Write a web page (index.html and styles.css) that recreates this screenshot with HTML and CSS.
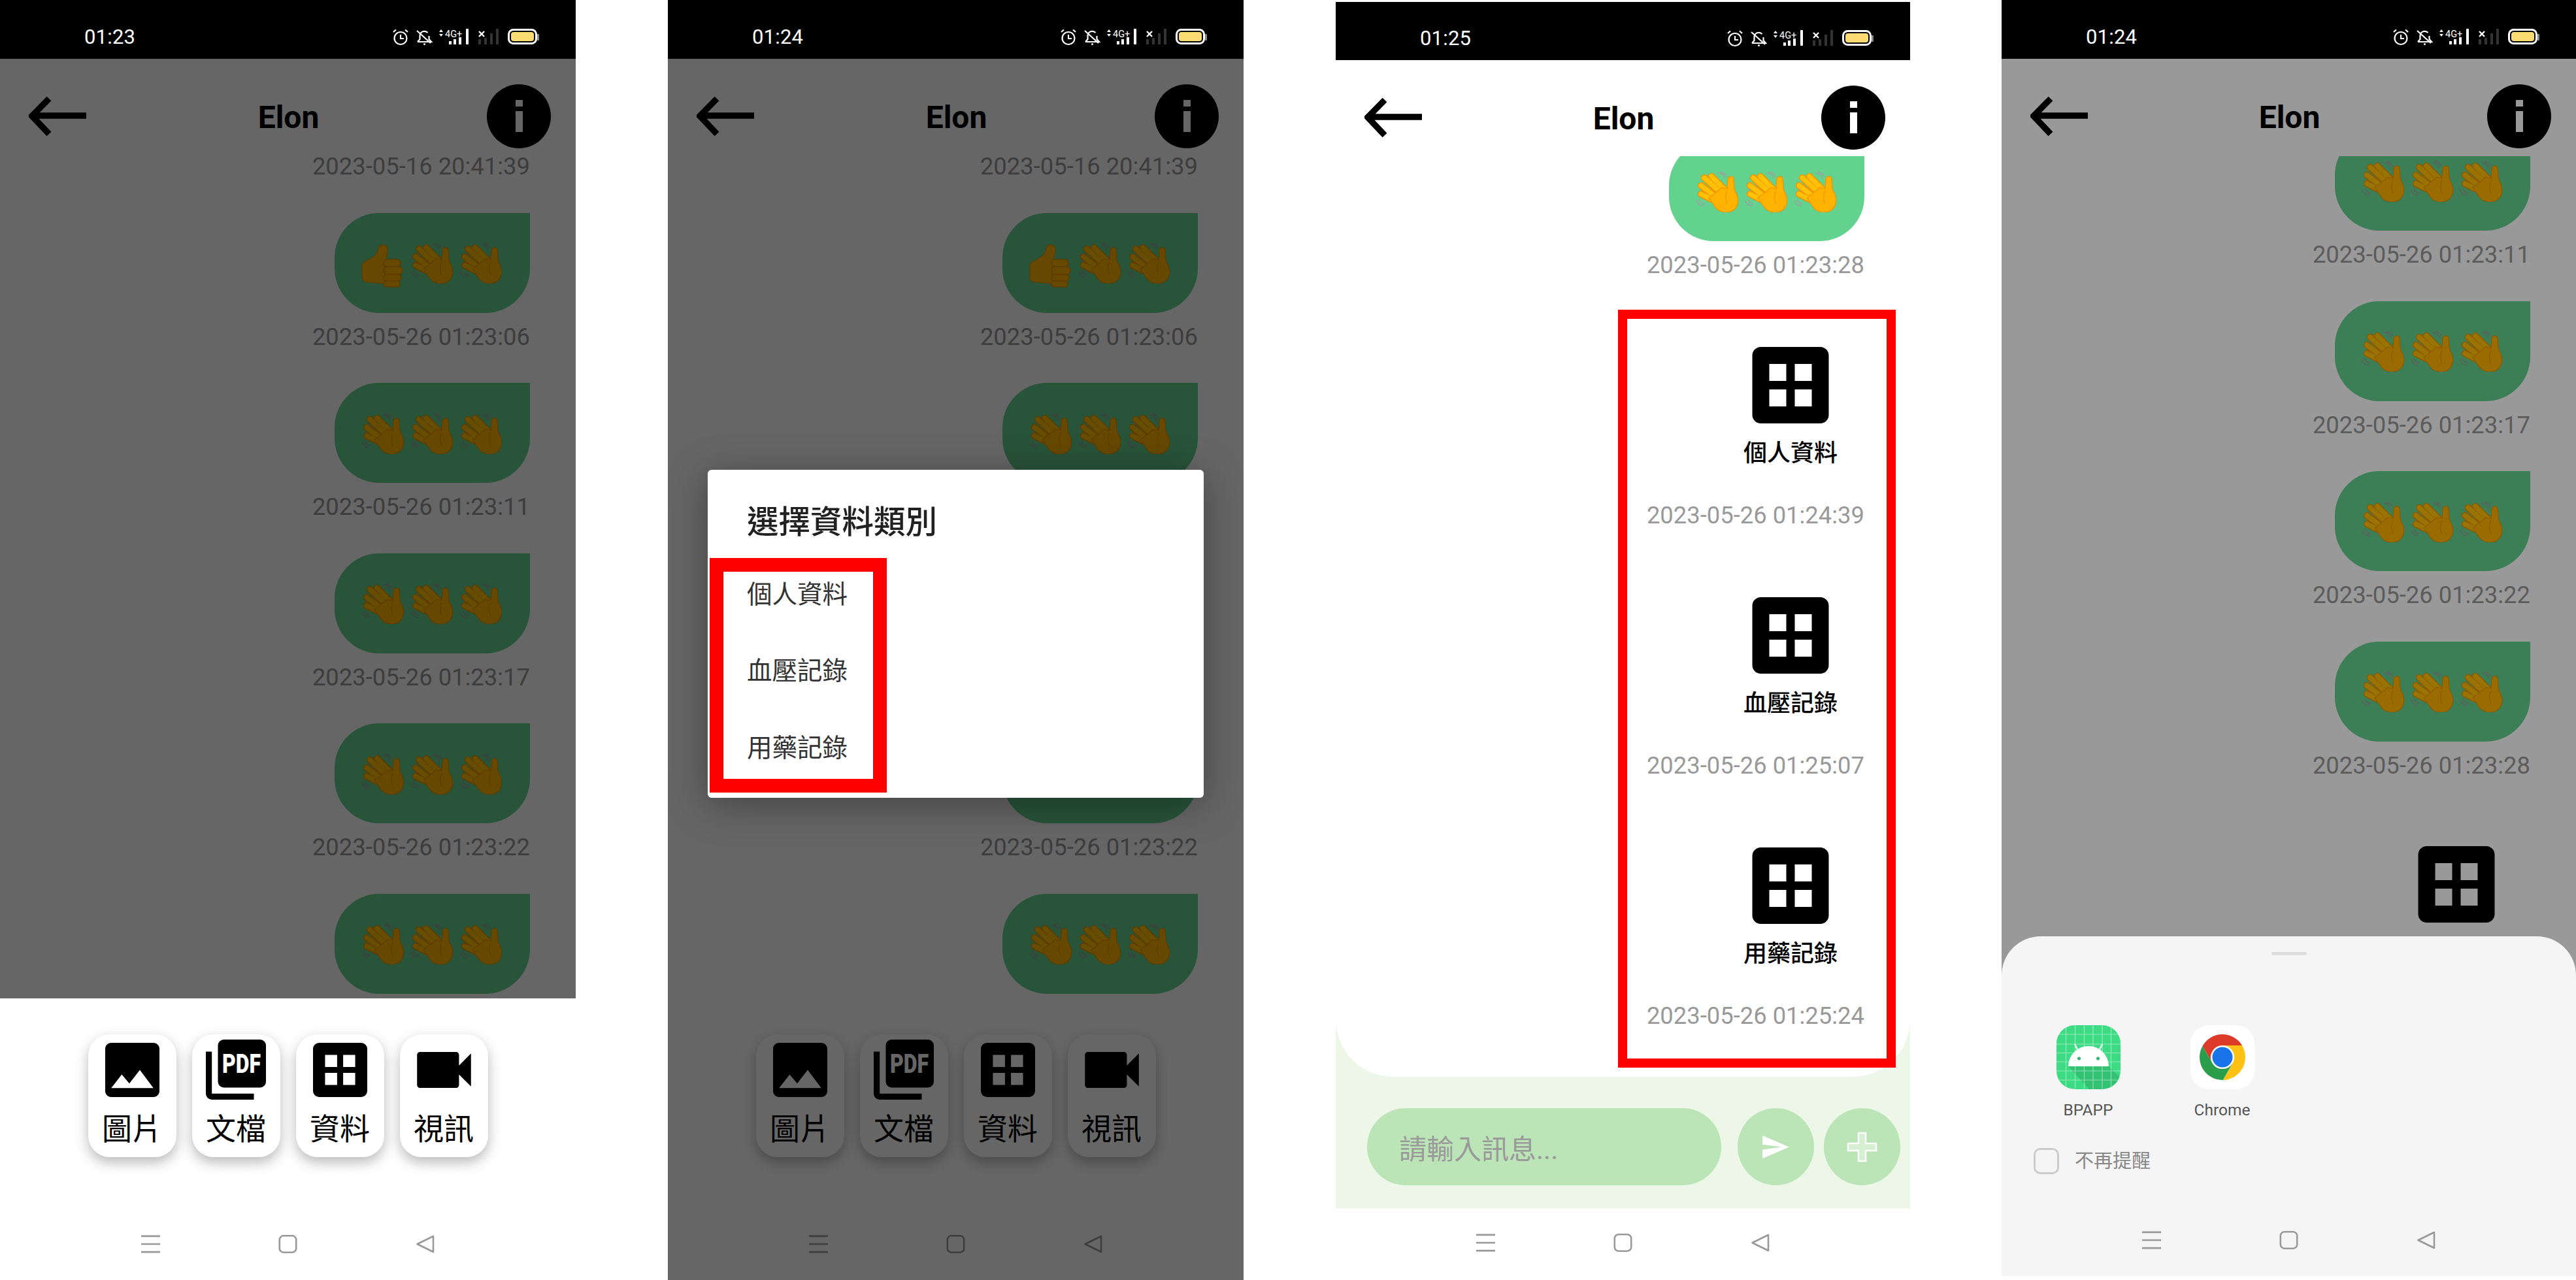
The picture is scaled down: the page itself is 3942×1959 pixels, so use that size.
FILE: index.html
```html
<!DOCTYPE html>
<html lang="zh-Hant">
<head>
    <meta charset="UTF-8">
    <title>BPAPP 聊天畫面</title>
    <link rel="stylesheet" href="styles.css">
</head>
<body>
    <!-- shared icons -->
    <svg class="sprites" xmlns="http://www.w3.org/2000/svg">
        <symbol id="status-icons" viewBox="0 0 226 25">
            <g fill="none" stroke="#fff" stroke-width="2.2">
                <circle cx="13" cy="14.5" r="9.5"/>
                <path d="M13 9v6h5M2 5l4-3.5M24 5l-4-3.5"/>
                <path d="M39 20l3.5-4v-5.5a7 7 0 0 1 12-4.5M56.500 11v5l3.500 4H39M38 3l21 19"/>
            </g>
            <circle cx="49.500" cy="23.500" r="1.500" fill="#fff"/>
            <path d="M75 1l3 4h-6zM75 12l3-4h-6z" fill="#fff"/>
            <g fill="#fff">
                <rect x="87" y="19" width="4" height="5"/>
                <rect x="94" y="16" width="4" height="8"/>
                <rect x="102" y="13" width="4" height="11"/>
                <rect x="113" y="0" width="4" height="24" rx="1"/>
            </g>
            <path d="M133 4l8 8M141 4l-8 8" stroke="#fff" stroke-width="2.4"/>
            <g fill="#333">
                <rect x="132" y="16" width="4" height="8"/>
                <rect x="141" y="14" width="4" height="10"/>
                <rect x="150" y="7" width="4" height="17"/>
                <rect x="159" y="0" width="4" height="24"/>
            </g>
            <rect x="178.500" y="1.500" width="42" height="21" rx="7" fill="#000" stroke="#fff" stroke-width="3"/>
            <rect x="182" y="5" width="35" height="14" rx="4" fill="#ffdc73"/>
            <rect x="222" y="8" width="3" height="10" rx="1" fill="#888"/>
        </symbol>

        <symbol id="clap" viewBox="0 0 75 64">
            <g fill="none" stroke="#9e9e9e" stroke-width="1.300" stroke-linecap="round">
                <path d="M38 4c4 0 8 2 10 7M42 2c4 1 7 3 9 7M5 46c1 4 5 7 10 8M9 44c1 3 4 6 8 7"/>
            </g>
            <g fill="none" stroke-linecap="round">
                <g stroke="#ef9400" stroke-width="10.500">
                    <path d="M28 9l21 21M17 11l23 21M12 23l21 16M12 36l16 8"/>
                </g>
                <g stroke="#ffc107" stroke-width="7.500">
                    <path d="M28 9l21 21M17 11l23 21M12 23l21 16M12 36l16 8"/>
                </g>
            </g>
            <path d="M24 42l20-16 8 2 1-14c0-6 8-7 9-1 1 7 0 13 2 18 4 7 6 13 4 20-2 9-11 14-20 13-8-1-14-6-17-12z" fill="#ffb300" stroke="#ef9400" stroke-width="1.200"/>
            <path d="M52 31c-3 6-3 14 0 20" fill="none" stroke="#ef9400" stroke-width="1.300"/>
        </symbol>

        <symbol id="thumb" viewBox="0 0 75 64" overflow="visible">
            <path d="M5 36c0-3 3-5 7-7 10-5 17-9 18-19 0-7 14-7 14 1 0 7-2 13-4 17v36l-26-2c-6 0-9-4-9-8z" fill="#ffb300" stroke="#ef9400" stroke-width="1.200"/>
            <g fill="#ffb300" stroke="#ef9400" stroke-width="1.500">
                <rect x="38" y="27" width="26" height="11" rx="5.500"/>
                <rect x="38" y="38" width="29" height="12" rx="6"/>
                <rect x="38" y="50" width="27" height="10" rx="5"/>
                <rect x="38" y="60" width="25" height="9" rx="4.500"/>
            </g>
        </symbol>

        <symbol id="grid" viewBox="3 3 18 18">
            <path d="M5 3h14a2 2 0 0 1 2 2v14a2 2 0 0 1-2 2H5a2 2 0 0 1-2-2V5a2 2 0 0 1 2-2zM7 7v4h4V7zM13 7v4h4V7zM7 13v4h4v-4zM13 13v4h4v-4z" fill-rule="evenodd"/>
        </symbol>

        <symbol id="image" viewBox="3 3 18 18">
            <path d="M21 19V5c0-1.100-.9-2-2-2H5c-1.100 0-2 .9-2 2v14c0 1.100.9 2 2 2h14c1.100 0 2-.9 2-2zM8.500 13.500l2.500 3.010L14.500 12l4.500 6H5l3.500-4.500z"/>
        </symbol>

        <symbol id="pdf" viewBox="0 0 92 92">
            <rect x="18.500" y="0" width="73.500" height="73.500" rx="9"/>
            <path d="M0 18.500h9.200v64.300h64.300V92H9.200A9.200 9.200 0 0 1 0 82.800z"/>
        </symbol>

        <symbol id="video" viewBox="3 6 18 12">
            <path d="M17 10.500V7c0-.55-.45-1-1-1H4c-.55 0-1 .45-1 1v10c0 .55.45 1 1 1h12c.55 0 1-.45 1-1v-3.500l4 4v-11l-4 4z"/>
        </symbol>

        <symbol id="back" viewBox="0 0 88 60">
            <path d="M88 29H6M31 3L5 29.500 31 57" fill="none" stroke="#000" stroke-width="9.500"/>
        </symbol>

        <symbol id="info" viewBox="0 0 98 98">
            <circle cx="49" cy="49" r="49"/>
            <rect x="44" y="24" width="11" height="10" fill="#fff"/>
            <rect x="44" y="41" width="11" height="32" fill="#fff"/>
        </symbol>

        <symbol id="nav-menu" viewBox="0 0 30 28">
            <path d="M0 1.500h30M0 14h30M0 26.500h30" stroke="#999" stroke-width="2.800"/>
        </symbol>
        <symbol id="nav-home" viewBox="0 0 28 28">
            <rect x="1.300" y="1.300" width="25.400" height="25.400" rx="6" fill="none" stroke="#999" stroke-width="2.600"/>
        </symbol>
        <symbol id="nav-back" viewBox="0 0 28 28">
            <path d="M26.500 2v24L2 14z" fill="none" stroke="#999" stroke-width="2.600" stroke-linejoin="round"/>
        </symbol>
    </svg>

    <div class="page">

        <!-- 1: attachment panel -->
        <section class="phone">
            <div class="status"><span class="clock">01:23</span><svg class="status-icons"><use href="#status-icons"/><text x="81" y="17" class="net-text">4G+</text></svg></div>
            <div class="chat">
                <header class="chat-head chat-head--short">
                    <svg class="back"><use href="#back"/></svg>
                    <h1 class="chat-title">Elon</h1>
                    <svg class="info"><use href="#info"/></svg>
                </header>
                <div class="msg-list">
                    <div class="msg msg--first"><div class="time">2023-05-16 20:41:39</div></div>
                    <div class="msg">
                        <div class="bubble"><svg class="emoji"><use href="#thumb"/></svg><svg class="emoji"><use href="#clap"/></svg><svg class="emoji"><use href="#clap"/></svg></div>
                        <div class="time">2023-05-26 01:23:06</div>
                    </div>
                    <div class="msg">
                        <div class="bubble"><svg class="emoji"><use href="#clap"/></svg><svg class="emoji"><use href="#clap"/></svg><svg class="emoji"><use href="#clap"/></svg></div>
                        <div class="time">2023-05-26 01:23:11</div>
                    </div>
                    <div class="msg">
                        <div class="bubble"><svg class="emoji"><use href="#clap"/></svg><svg class="emoji"><use href="#clap"/></svg><svg class="emoji"><use href="#clap"/></svg></div>
                        <div class="time">2023-05-26 01:23:17</div>
                    </div>
                    <div class="msg">
                        <div class="bubble"><svg class="emoji"><use href="#clap"/></svg><svg class="emoji"><use href="#clap"/></svg><svg class="emoji"><use href="#clap"/></svg></div>
                        <div class="time">2023-05-26 01:23:22</div>
                    </div>
                    <div class="msg">
                        <div class="bubble"><svg class="emoji"><use href="#clap"/></svg><svg class="emoji"><use href="#clap"/></svg><svg class="emoji"><use href="#clap"/></svg></div>
                    </div>
                </div>
                <div class="dim"></div>
            </div>
            <div class="attach-panel">
                <div class="attach-card"><svg class="ic-image"><use href="#image"/></svg><span>圖片</span></div>
                <div class="attach-card"><svg class="ic-pdf"><use href="#pdf"/><text class="pdf-text" transform="translate(25 51) scale(.8 1)">PDF</text></svg><span>文檔</span></div>
                <div class="attach-card"><svg class="ic-image"><use href="#grid"/></svg><span>資料</span></div>
                <div class="attach-card"><svg class="ic-video"><use href="#video"/></svg><span>視訊</span></div>
            </div>
            <nav class="navbar">
                <svg class="nav-icon"><use href="#nav-menu"/></svg>
                <svg class="nav-icon"><use href="#nav-home"/></svg>
                <svg class="nav-icon"><use href="#nav-back"/></svg>
            </nav>
        </section>

        <!-- 2: category dialog -->
        <section class="phone">
            <div class="status"><span class="clock">01:24</span><svg class="status-icons"><use href="#status-icons"/><text x="81" y="17" class="net-text">4G+</text></svg></div>
            <div class="chat">
                <header class="chat-head chat-head--short">
                    <svg class="back"><use href="#back"/></svg>
                    <h1 class="chat-title">Elon</h1>
                    <svg class="info"><use href="#info"/></svg>
                </header>
                <div class="msg-list">
                    <div class="msg msg--first"><div class="time">2023-05-16 20:41:39</div></div>
                    <div class="msg">
                        <div class="bubble"><svg class="emoji"><use href="#thumb"/></svg><svg class="emoji"><use href="#clap"/></svg><svg class="emoji"><use href="#clap"/></svg></div>
                        <div class="time">2023-05-26 01:23:06</div>
                    </div>
                    <div class="msg">
                        <div class="bubble"><svg class="emoji"><use href="#clap"/></svg><svg class="emoji"><use href="#clap"/></svg><svg class="emoji"><use href="#clap"/></svg></div>
                        <div class="time">2023-05-26 01:23:11</div>
                    </div>
                    <div class="msg">
                        <div class="bubble"><svg class="emoji"><use href="#clap"/></svg><svg class="emoji"><use href="#clap"/></svg><svg class="emoji"><use href="#clap"/></svg></div>
                        <div class="time">2023-05-26 01:23:17</div>
                    </div>
                    <div class="msg">
                        <div class="bubble"><svg class="emoji"><use href="#clap"/></svg><svg class="emoji"><use href="#clap"/></svg><svg class="emoji"><use href="#clap"/></svg></div>
                        <div class="time">2023-05-26 01:23:22</div>
                    </div>
                    <div class="msg">
                        <div class="bubble"><svg class="emoji"><use href="#clap"/></svg><svg class="emoji"><use href="#clap"/></svg><svg class="emoji"><use href="#clap"/></svg></div>
                    </div>
                </div>
            </div>
            <div class="attach-panel">
                <div class="attach-card"><svg class="ic-image"><use href="#image"/></svg><span>圖片</span></div>
                <div class="attach-card"><svg class="ic-pdf"><use href="#pdf"/><text class="pdf-text" transform="translate(25 51) scale(.8 1)">PDF</text></svg><span>文檔</span></div>
                <div class="attach-card"><svg class="ic-image"><use href="#grid"/></svg><span>資料</span></div>
                <div class="attach-card"><svg class="ic-video"><use href="#video"/></svg><span>視訊</span></div>
            </div>
            <nav class="navbar">
                <svg class="nav-icon"><use href="#nav-menu"/></svg>
                <svg class="nav-icon"><use href="#nav-home"/></svg>
                <svg class="nav-icon"><use href="#nav-back"/></svg>
            </nav>
            <div class="dim dim--phone"></div>
            <div class="dialog">
                <h2 class="dialog-title">選擇資料類別</h2>
                <div class="dialog-item">個人資料</div>
                <div class="dialog-item">血壓記錄</div>
                <div class="dialog-item">用藥記錄</div>
                <div class="mark mark--dialog"></div>
            </div>
        </section>

        <!-- 3: sent records -->
        <section class="phone phone--input">
            <div class="status"><span class="clock">01:25</span><svg class="status-icons"><use href="#status-icons"/><text x="81" y="17" class="net-text">4G+</text></svg></div>
            <div class="chat chat--panel">
                <header class="chat-head">
                    <svg class="back"><use href="#back"/></svg>
                    <h1 class="chat-title">Elon</h1>
                    <svg class="info"><use href="#info"/></svg>
                </header>
                <div class="msg-list msg-list--end">
                    <div class="msg">
                        <div class="bubble"><svg class="emoji"><use href="#clap"/></svg><svg class="emoji"><use href="#clap"/></svg><svg class="emoji"><use href="#clap"/></svg></div>
                        <div class="time">2023-05-26 01:23:28</div>
                    </div>
                    <div class="msg msg--file">
                        <div class="file"><svg class="file-icon"><use href="#grid"/></svg><div class="file-name">個人資料</div></div>
                        <div class="time time--file">2023-05-26 01:24:39</div>
                    </div>
                    <div class="msg msg--file">
                        <div class="file"><svg class="file-icon"><use href="#grid"/></svg><div class="file-name">血壓記錄</div></div>
                        <div class="time time--file">2023-05-26 01:25:07</div>
                    </div>
                    <div class="msg msg--file">
                        <div class="file"><svg class="file-icon"><use href="#grid"/></svg><div class="file-name">用藥記錄</div></div>
                        <div class="time time--file">2023-05-26 01:25:24</div>
                    </div>
                </div>
            </div>
            <div class="mark mark--list"></div>
            <div class="input-bar">
                <div class="msg-input">請輸入訊息...</div>
                <div class="round-btn">
                    <svg class="ic-send" viewBox="2 3 21 18"><path d="M2.010 21L23 12 2.010 3 2 10l15 2-15 2z" fill="#fff"/></svg>
                </div>
                <div class="round-btn round-btn--plus">
                    <svg class="ic-plus" viewBox="0 0 47 47"><path d="M18 2h11v16h16v11H29v16H18V29H2V18h16z" fill="#d5efd0" stroke="#fff" stroke-width="2.500" stroke-linejoin="round"/></svg>
                </div>
            </div>
            <nav class="navbar navbar--raised">
                <svg class="nav-icon"><use href="#nav-menu"/></svg>
                <svg class="nav-icon"><use href="#nav-home"/></svg>
                <svg class="nav-icon"><use href="#nav-back"/></svg>
            </nav>
        </section>

        <!-- 4: open with -->
        <section class="phone phone--sheet">
            <div class="status"><span class="clock">01:24</span><svg class="status-icons"><use href="#status-icons"/><text x="81" y="17" class="net-text">4G+</text></svg></div>
            <div class="chat">
                <header class="chat-head">
                    <svg class="back"><use href="#back"/></svg>
                    <h1 class="chat-title">Elon</h1>
                    <svg class="info"><use href="#info"/></svg>
                </header>
                <div class="msg-list">
                    <div class="msg msg--cut">
                        <div class="bubble"><svg class="emoji"><use href="#clap"/></svg><svg class="emoji"><use href="#clap"/></svg><svg class="emoji"><use href="#clap"/></svg></div>
                        <div class="time">2023-05-26 01:23:11</div>
                    </div>
                    <div class="msg">
                        <div class="bubble"><svg class="emoji"><use href="#clap"/></svg><svg class="emoji"><use href="#clap"/></svg><svg class="emoji"><use href="#clap"/></svg></div>
                        <div class="time">2023-05-26 01:23:17</div>
                    </div>
                    <div class="msg">
                        <div class="bubble"><svg class="emoji"><use href="#clap"/></svg><svg class="emoji"><use href="#clap"/></svg><svg class="emoji"><use href="#clap"/></svg></div>
                        <div class="time">2023-05-26 01:23:22</div>
                    </div>
                    <div class="msg">
                        <div class="bubble"><svg class="emoji"><use href="#clap"/></svg><svg class="emoji"><use href="#clap"/></svg><svg class="emoji"><use href="#clap"/></svg></div>
                        <div class="time">2023-05-26 01:23:28</div>
                    </div>
                    <div class="msg msg--file">
                        <div class="file"><svg class="file-icon"><use href="#grid"/></svg></div>
                    </div>
                </div>
            </div>
            <div class="dim dim--light"></div>
            <div class="sheet">
                <div class="sheet-handle"></div>
                <div class="app-row">
                    <div class="app">
                        <svg class="app-icon" viewBox="0 0 98 98">
                            <defs><clipPath id="tile"><rect width="98" height="98" rx="28"/></clipPath></defs>
                            <g clip-path="url(#tile)">
                                <rect width="98" height="98" fill="#3ddc84"/>
                                <path d="M18 63h62l18 18v17H50z" fill="#2fb56c" opacity=".7"/>
                                <path d="M14.500 0v98M28.500 0v98M42.500 0v98M56 0v98M70 0v98M83.500 0v98M0 14h98M0 29h98M0 42.500h98M0 56h98M0 70h98M0 84h98" stroke="#fff" stroke-opacity=".45" stroke-width="1.200"/>
                            </g>
                            <path d="M18 63a31 31 0 0 1 62 0z" fill="#fff"/>
                            <path d="M33 39l-5-10M65 39l5-10" stroke="#fff" stroke-width="2"/>
                            <circle cx="34.500" cy="51" r="2.500" fill="#2fb56c"/>
                            <circle cx="63.500" cy="51" r="2.500" fill="#2fb56c"/>
                        </svg>
                        <div class="app-name">BPAPP</div>
                    </div>
                    <div class="app">
                        <svg class="app-icon" viewBox="-49 -49 98 98">
                            <rect x="-49" y="-49" width="98" height="98" rx="28" fill="#fff"/>
                            <path d="M30-18A35 35 0 0 0-30.600-17L-15.600 9A18 18 0 0 1 0-18z" fill="#de3a2a"/>
                            <path d="M.6 35A35 35 0 0 0 30-18H0A18 18 0 0 1 15.600 9z" fill="#fdc214"/>
                            <path d="M-30.600-17A35 35 0 0 0 .6 35L15.600 9A18 18 0 0 1-15.600 9z" fill="#2b9e4c"/>
                            <circle r="15.500" fill="#1a73e8"/>
                        </svg>
                        <div class="app-name">Chrome</div>
                    </div>
                </div>
                <label class="remember"><span class="check"></span>不再提醒</label>
                <nav class="navbar navbar--sheet">
                    <svg class="nav-icon"><use href="#nav-menu"/></svg>
                    <svg class="nav-icon"><use href="#nav-home"/></svg>
                    <svg class="nav-icon"><use href="#nav-back"/></svg>
                </nav>
            </div>
        </section>

    </div>
</body>
</html>
```
FILE: styles.css
```css
html, body {
    margin: 0;
    padding: 0;
    background-color: #fff;
}
body {
    width: 3942px;
    height: 1959px;
    overflow: hidden;
    font-family: Roboto, "Noto Sans CJK TC", sans-serif;
}
.sprites {
    position: absolute;
    width: 0;
    height: 0;
}
.page {
    display: flex;
    height: 1959px;
}

/* phone shell */
.phone {
    position: relative;
    display: flex;
    flex-direction: column;
    flex: none;
    width: 881px;
    margin-right: 141px;
    background-color: #fff;
}
.phone--input {
    width: 879px;
    margin-top: 3px;
    margin-right: 140px;
    background-color: #edf7e8;
}
.phone--sheet {
    width: 879px;
    height: 1953px;
    margin-right: 0;
}
.status {
    display: flex;
    align-items: center;
    justify-content: space-between;
    flex: none;
    box-sizing: border-box;
    height: 90px;
    padding: 22px 55px 0 129px;
    background-color: #000;
}
.phone--input .status {
    height: 89px;
}
.clock {
    color: #fff;
    font-size: 31px;
    letter-spacing: .2px;
}
.status-icons {
    width: 226px;
    height: 33px;
    overflow: visible;
}
.net-text {
    fill: #fff;
    font-family: Roboto, sans-serif;
    font-size: 14.500px;
}
.pdf-text {
    fill: #fff;
    font-family: Roboto, sans-serif;
    font-size: 40px;
    font-weight: 900;
}

/* chat */
.chat {
    position: relative;
    display: flex;
    flex-direction: column;
    flex: 1;
    min-height: 0;
    overflow: hidden;
    background-color: #fff;
}
.chat--panel {
    border-radius: 0 0 88px 88px;
}
.chat-head {
    display: grid;
    grid-template-columns: 1fr auto 1fr;
    align-items: center;
    flex: none;
    box-sizing: border-box;
    height: 149px;
    padding: 39px 38px 12px 40px;
}
.chat-head--short {
    height: 144px;
    padding-bottom: 7px;
}
.phone--input .chat-head {
    height: 147px;
    padding-bottom: 10px;
}
.chat-title {
    margin: 3px 0 0;
    color: #000;
    font-size: 48px;
    font-weight: 700;
    line-height: 60px;
}
.back {
    width: 88px;
    height: 60px;
    margin-left: 4px;
}
.info {
    justify-self: end;
    width: 98px;
    height: 98px;
}
.msg-list {
    display: flex;
    flex-direction: column;
    flex: 1;
    min-height: 0;
    overflow: hidden;
}
.msg-list--end {
    justify-content: flex-end;
    padding-bottom: 22px;
}
.msg {
    display: flex;
    flex-direction: column;
    align-items: flex-end;
    flex: none;
    padding-right: 70px;
    margin-bottom: 49.6px;
}
.msg--first .time {
    margin-top: 0;
}
.msg--cut {
    margin-top: -39px;
}
.msg--file {
    padding-top: 54.4px;
}
.phone--sheet .msg--file {
    padding-top: 52.4px;
}
.bubble {
    display: flex;
    align-items: center;
    justify-content: center;
    box-sizing: border-box;
    width: 299px;
    height: 153px;
    background-color: #64d28f;
    border-radius: 68px 0 68px 68px;
}
.emoji {
    width: 75px;
    height: 64px;
    overflow: visible;
}
.time {
    margin-top: 16px;
    color: #999;
    font-size: 36.400px;
    line-height: 42px;
}
.time--file {
    margin-top: 48px;
}
.file {
    display: flex;
    flex-direction: column;
    align-items: center;
    width: 226px;
}
.file-icon {
    width: 118px;
    height: 117px;
}
.file-name {
    margin-top: 20px;
    color: #000;
    font-size: 36px;
    font-weight: 500;
    line-height: 52px;
}

/* overlays */
.dim {
    position: absolute;
    inset: 0;
    z-index: 1;
    background-color: rgba(0, 0, 0, .6);
}
.dim--phone {
    top: 90px;
}
.dim--light {
    top: 90px;
    background-color: rgba(0, 0, 0, .4);
}
.mark {
    position: absolute;
    z-index: 3;
    box-sizing: border-box;
    border-style: solid;
    border-color: #f00;
}
.mark--dialog {
    left: 3px;
    top: 135px;
    width: 271px;
    height: 359px;
    border-width: 21px;
}
.mark--list {
    left: 432px;
    top: 471px;
    width: 425px;
    height: 1160px;
    border-width: 14px;
}

/* attachment panel */
.attach-panel {
    display: flex;
    justify-content: center;
    gap: 24px;
    flex: none;
    box-sizing: border-box;
    height: 321px;
    padding-top: 55px;
    background-color: #fff;
}
.attach-card {
    display: flex;
    flex-direction: column;
    align-items: center;
    justify-content: flex-end;
    box-sizing: border-box;
    width: 135px;
    height: 188px;
    padding-bottom: 10px;
    background-color: #fff;
    border-radius: 33px;
    box-shadow: 0 8px 20px rgba(0, 0, 0, .28);
    color: #000;
    font-size: 46px;
    line-height: 66px;
}
.ic-image {
    width: 83px;
    height: 83px;
    margin-bottom: 16px;
}
.ic-pdf {
    width: 92px;
    height: 92px;
    margin-bottom: 12px;
}
.ic-video {
    width: 83px;
    height: 55px;
    margin-bottom: 30px;
}

/* input */
.input-bar {
    display: flex;
    flex: none;
    box-sizing: border-box;
    height: 201px;
    padding: 48px 15px 35px 48px;
}
.msg-input {
    display: flex;
    align-items: center;
    flex: 1;
    margin-right: 25px;
    padding-left: 49px;
    background-color: #bbe5b6;
    border-radius: 59px;
    color: #9a9a9a;
    font-size: 42px;
}
.round-btn {
    display: flex;
    align-items: center;
    justify-content: center;
    flex: none;
    width: 117px;
    height: 118px;
    background-color: #bbe5b6;
    border-radius: 50%;
}
.round-btn--plus {
    margin-left: 15px;
}
.ic-send {
    width: 41px;
    height: 35px;
}
.ic-plus {
    width: 47px;
    height: 47px;
}

/* navigation bar */
.navbar {
    display: flex;
    align-items: center;
    justify-content: center;
    gap: 181px;
    flex: none;
    height: 110px;
    background-color: #fff;
}
.navbar--raised {
    box-sizing: border-box;
    padding-bottom: 4px;
}
.navbar--sheet {
    margin-top: auto;
    padding-top: 2px;
    background-color: transparent;
}
.nav-icon {
    width: 29px;
    height: 28px;
}

/* dialog */
.dialog {
    position: absolute;
    left: 61px;
    top: 719px;
    z-index: 2;
    box-sizing: border-box;
    width: 759px;
    height: 502px;
    padding: 46px 0 0 60px;
    background-color: #fff;
    border-radius: 6px;
    box-shadow: 0 10px 60px rgba(0, 0, 0, .35);
}
.dialog-title {
    margin: 0 0 12px;
    color: #212121;
    font-size: 48.500px;
    font-weight: 500;
    line-height: 70px;
}
.dialog-item {
    display: flex;
    align-items: center;
    height: 117.500px;
    color: #333;
    font-size: 38.500px;
}

/* open-with sheet */
.sheet {
    position: absolute;
    left: 0;
    right: 0;
    bottom: 0;
    z-index: 2;
    display: flex;
    flex-direction: column;
    height: 520px;
    background-color: #f5f5f5;
    border-radius: 60px 60px 0 0;
}
.sheet-handle {
    flex: none;
    width: 54px;
    height: 5px;
    margin: 24px auto 0;
    background-color: #ddd;
    border-radius: 3px;
}
.app-row {
    display: flex;
    flex: none;
    margin-top: 107px;
    padding-left: 30px;
}
.app {
    display: flex;
    flex-direction: column;
    align-items: center;
    width: 205px;
}
.app-icon {
    width: 98px;
    height: 98px;
}
.app-name {
    margin-top: 17px;
    color: #555;
    font-size: 24.500px;
    line-height: 30px;
}
.remember {
    display: flex;
    align-items: center;
    gap: 24px;
    flex: none;
    margin: 43px 0 0 49px;
    color: #888;
    font-size: 29px;
    line-height: 40px;
}
.check {
    box-sizing: border-box;
    width: 39px;
    height: 40px;
    border: 3.500px solid #ccc;
    border-radius: 10px;
}
```
